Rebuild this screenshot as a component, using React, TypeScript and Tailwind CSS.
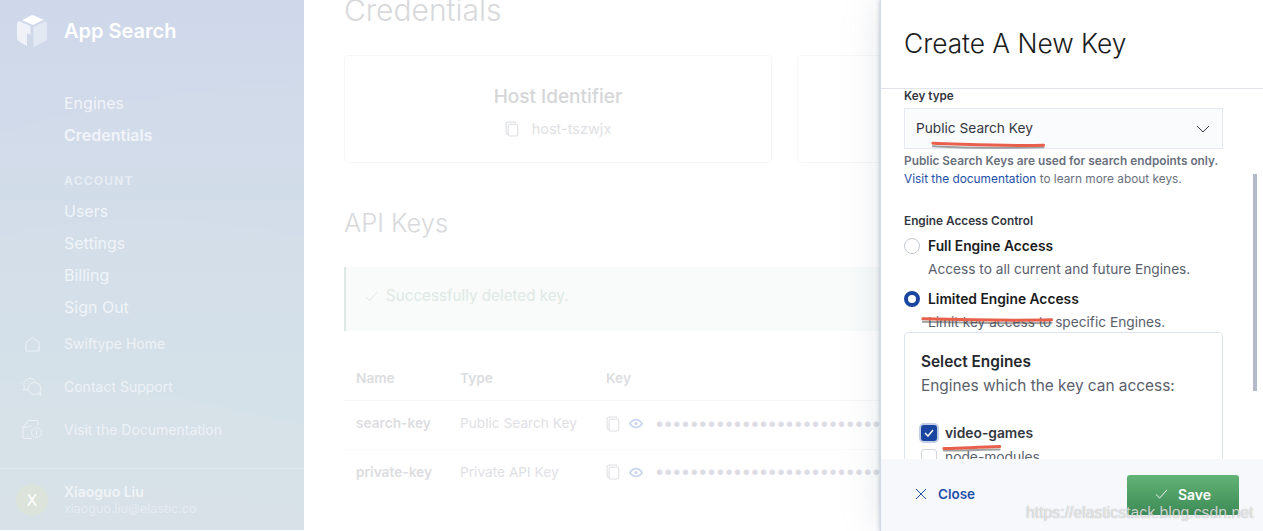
const font = { fontFamily: "Inter, 'Noto Sans', sans-serif" }

function CopyIcon({ className = "" }: { className?: string }) {
  return (
    <svg viewBox="0 0 16 18" fill="none" stroke="currentColor" strokeWidth="1.2" className={className}>
      <rect x="3.6" y="3.6" width="11" height="13.4" rx="2" />
      <path d="M3.4 15.4C2 15 1.2 14 1.2 12.6V3.4C1.2 2 2.2 1 3.6 1h7.2c.9 0 1.6.5 2 1.3" />
    </svg>
  )
}

function EyeIcon() {
  return (
    <svg viewBox="0 0 16 12" fill="none" className="w-[14px] h-[11px] text-[#cbd6ee]">
      <path d="M1 6c2-3 4.300-4.500 7-4.500S13 3 15 6c-2 3-4.300 4.500-7 4.500S3 9 1 6z" stroke="currentColor" strokeWidth="2" />
      <circle cx="8" cy="6" r="1.800" fill="currentColor" />
    </svg>
  )
}

function Logo() {
  return (
    <svg viewBox="0 0 30 32" className="w-[30px] h-[32px] shrink-0">
      <path d="M13.500 0.800C15 0.200 16.200 0.200 17.500 0.800L26.500 4.800 16 10 5 5.200z" fill="#ffffff" />
      <path d="M3.200 6.500 13.500 11.200V20L10 18V31.200L2.500 26.800C0.900 25.800 0 24.500 0 22.800V10C0 7.500 1.500 5.900 3.200 6.500z" fill="#eff3f9" />
      <path d="M27.800 6.500C29.200 6 30 8 30 10V22.800C30 24.500 29 25.800 27.500 26.600L16.500 32V12z" fill="#e3e9f4" />
    </svg>
  )
}

function HomeIcon() {
  return (
    <svg viewBox="0 0 16 16" fill="none" stroke="#eef2f6" strokeWidth="1" className="w-[15px] h-[16px]">
      <path d="M1 15.500V6.500L8 .8l7 5.700v9z" strokeLinejoin="round" />
    </svg>
  )
}

function ChatIcon() {
  return (
    <svg viewBox="0 0 20 20" fill="none" stroke="#eef2f6" strokeWidth="1" className="w-[20px] h-[20px]">
      <path d="M5.500 12.500 1.500 13.500 2.500 10.500C.5 6 3.500 1.500 8 1.500c2.500 0 4.500 1.200 5.500 3" />
      <ellipse cx="12.500" cy="11.500" rx="6.500" ry="6" />
      <path d="M16 16.500 19 18.500 18.500 15" />
    </svg>
  )
}

function DocIcon() {
  return (
    <svg viewBox="0 0 20 21" fill="none" stroke="#eef2f6" strokeWidth="1" className="w-[20px] h-[21px]">
      <path d="M10 19.500H1V8L6.500 1.500H16V7" />
      <path d="M1 8h6.500l2-2" />
      <circle cx="14.500" cy="13.500" r="5" />
      <path d="M14.500 12v4M14.500 10v1" />
    </svg>
  )
}

function SideLink({ label, bold }: { label: string; bold?: boolean }) {
  return (
    <div className={`h-[32px] flex items-center text-[16px] text-[#f1f4f8] ${bold ? "font-semibold" : ""}`}>
      {label}
    </div>
  )
}

function SecondaryLink({ icon, label }: { icon: React.ReactNode; label: string }) {
  return (
    <div className="h-[43px] flex items-center text-[14px] text-[#eef2f6]">
      <div className="w-[64px] flex justify-center">{icon}</div>
      {label}
    </div>
  )
}

function Sidebar() {
  return (
    <aside className="relative w-[304px] h-[530px] shrink-0 overflow-hidden bg-gradient-to-b from-[#cfd8ea] to-[#d4e1e8]">
      <svg viewBox="0 0 304 530" className="absolute inset-0 w-full h-full" fill="#ffffff">
        <path d="M0 133C90 105 190 90 304 80V530H0z" opacity=".03" />
        <path d="M0 236C90 212 200 215 304 237V530H0z" opacity=".03" />
        <path d="M0 312C90 280 210 275 304 295V530H0z" opacity=".02" />
        <path d="M0 382C100 375 210 405 304 425V530H0z" opacity=".03" />
        <path d="M0 500C100 480 210 490 304 510V530H0z" opacity=".03" />
      </svg>
      <div className="relative h-full flex flex-col">
        <div className="h-[62px] flex items-center pl-[17px] gap-[17px]">
          <Logo />
          <div className="text-[20px] font-semibold text-white">App Search</div>
        </div>
        <nav className="pl-[64px] pt-[25px]">
          <SideLink label="Engines" />
          <SideLink label="Credentials" bold />
          <div className="mt-[15px] h-[29px] flex items-center text-[12px] font-bold tracking-[0.1em] text-[#e7ecf3]">
            ACCOUNT
          </div>
          <SideLink label="Users" />
          <SideLink label="Settings" />
          <SideLink label="Billing" />
          <SideLink label="Sign Out" />
        </nav>
        <div className="-mt-[1px]">
          <SecondaryLink icon={<HomeIcon />} label="Swiftype Home" />
          <SecondaryLink icon={<ChatIcon />} label="Contact Support" />
          <SecondaryLink icon={<DocIcon />} label="Visit the Documentation" />
        </div>
        <div className="mt-auto h-[62px] border-t border-[#dfe7ee] flex items-center">
          <div className="w-[64px] flex justify-center">
            <div className="w-[32px] h-[32px] rounded-full bg-[#dbe3da] text-white text-[16px] flex items-center justify-center">
              X
            </div>
          </div>
          <div>
            <div className="text-[14px] leading-[17px] font-semibold text-[#f1f4f6]">Xiaoguo Liu</div>
            <div className="text-[12.500px] leading-[17px] text-[#e6ecf0]">xiaoguo.liu@elastic.co</div>
          </div>
        </div>
      </div>
    </aside>
  )
}

function CredentialCard({ title, value }: { title: string; value: string }) {
  return (
    <div className="w-[428px] h-[108px] shrink-0 rounded-[4px] border border-[#f6f6f7] pt-[6px] flex flex-col items-center justify-center">
      <div className="text-[19px] leading-[24px] font-medium text-[#d5d6d9]">{title}</div>
      <div className="mt-[10px] flex items-center gap-[13px] text-[14.500px] leading-[20px] text-[#e0e1e4]">
        <CopyIcon className="w-[14px] h-[16px] text-[#dcdde0]" />
        {value}
      </div>
    </div>
  )
}

function KeyRow({ name, type, last }: { name: string; type: string; last?: boolean }) {
  return (
    <div className={`h-[49px] flex items-center text-[13.700px] ${last ? "pb-[5px]" : "pb-[3px] border-b border-[#fafafb]"}`}>
      <div className="w-[104px] pl-[12px] font-semibold text-[#dcdde0] box-content">{name}</div>
      <div className="w-[146px] text-[#e0e1e4]">{type}</div>
      <div className="flex items-center whitespace-nowrap">
        <CopyIcon className="w-[14px] h-[16px] text-[#dfe0e3]" />
        <div className="ml-[9px]">
          <EyeIcon />
        </div>
        <div className="ml-[13px] text-[20px] leading-[16px] tracking-[1.670px] text-[#dcdde3]" style={{ fontFamily: "'Liberation Sans', sans-serif" }}>
          {"•".repeat(40)}
        </div>
      </div>
    </div>
  )
}

function Main() {
  return (
    <main className="flex-1 min-w-0 overflow-hidden pl-[40px]">
      <h1 className="-mt-[10px] h-[65px] text-[30px] leading-[40px] font-light text-[#d8d9db]">Credentials</h1>
      <div className="flex gap-[25px]">
        <CredentialCard title="Host Identifier" value="host-tszwjx" />
        <CredentialCard title="API Endpoint" value="host-tszwjx" />
      </div>
      <h2 className="mt-[43px] text-[25.500px] leading-[34px] font-light text-[#d8d9db]">API Keys</h2>
      <div className="mt-[27px] h-[64px] border-l-2 border-[#dfe9e4] bg-[#f8fbfa] pl-[19px] pb-[6px] flex items-center gap-[8px] text-[15.200px] text-[#dfe9e4]">
        <svg viewBox="0 0 14 12" fill="none" stroke="#dce7e1" strokeWidth="1" className="w-[13px] h-[11px]">
          <path d="M1 6.500 5 10.500 13 1" />
        </svg>
        Successfully deleted key.
      </div>
      <div className="mt-[26px] w-[900px]">
        <div className="h-[44px] flex items-center text-[13.700px] font-semibold text-[#dcdde0] border-b border-[#f5f5f6]">
          <div className="w-[104px] pl-[12px] box-content">Name</div>
          <div className="w-[146px]">Type</div>
          <div>Key</div>
        </div>
        <KeyRow name="search-key" type="Public Search Key" />
        <KeyRow name="private-key" type="Private API Key" last />
      </div>
    </main>
  )
}

function Drawer() {
  return (
    <section className="absolute top-0 right-0 bottom-0 w-[383px] bg-white border-l border-[#d3dae6] flex flex-col shadow-[0_0_36px_rgba(130,140,170,0.22),0_0_4px_rgba(100,110,140,0.45)]">
      <header className="h-[89px] shrink-0 border-b border-[#e3e6ef] pl-[23px] flex items-center">
        <h2 className="text-[26.300px] font-light text-[#1a1c21]">Create A New Key</h2>
      </header>
      <div className="relative flex-1 min-h-0 overflow-hidden pl-[23px] pr-[40px]">
        <div className="absolute right-[6px] top-[85px] w-[4px] h-[217px] bg-[#b5bac8]" />
        <div className="text-[11.700px] leading-[14px] font-semibold text-[#343741]">Key type</div>
        <div className="mt-[5px] h-[41px] bg-[#fafbfd] border border-[#e6e9f1] pl-[11px] pr-[12px] flex items-center justify-between text-[13.700px] text-[#343741]">
          Public Search Key
          <svg viewBox="0 0 14 8" fill="none" stroke="#343741" strokeWidth="1" className="w-[14px] h-[8px]">
            <path d="M1 1l6 6 6-6" />
          </svg>
        </div>
        <p className="mt-[3px] text-[11.850px] leading-[18px] text-[#69707d] whitespace-nowrap">
          <span className="font-semibold">Public Search Keys are used for search endpoints only.</span>
          <br />
          <span className="text-[#1f4fa8]">Visit the documentation</span> to learn more about keys.
        </p>
        <div className="mt-[25px] text-[11.800px] leading-[16px] font-semibold text-[#343741]">Engine Access Control</div>
        <div className="mt-[7px] flex items-center gap-[8px] h-[20px] text-[13.800px] font-semibold text-[#1a1c21]">
          <div className="w-[16px] h-[16px] rounded-full bg-white border border-[#c4c8d2]" />
          Full Engine Access
        </div>
        <div className="mt-[3px] pl-[24px] text-[13.700px] leading-[20px] text-[#5a606b]">Access to all current and future Engines.</div>
        <div className="mt-[10px] flex items-center gap-[8px] h-[20px] text-[13.800px] font-semibold text-[#1a1c21]">
          <div className="w-[16px] h-[16px] rounded-full bg-white border-[4px] border-[#1a45a0]" />
          Limited Engine Access
        </div>
        <div className="mt-[3px] pl-[24px] text-[13.700px] leading-[20px] text-[#5a606b]">Limit key access to specific Engines.</div>
        <div className="h-[200px] rounded-[4px] border border-[#dfe5ef] pt-[18px] pl-[16px] pr-[16px]">
          <div className="text-[15.400px] leading-[22px] font-semibold text-[#26282e]">Select Engines</div>
          <div className="mt-[1px] text-[15.400px] leading-[24px] whitespace-nowrap text-[#5a606b]">Engines which the key can access:</div>
          <div className="mt-[23px] flex items-center gap-[8px] h-[24px] text-[13.800px] font-semibold text-[#343741]">
            <div className="w-[16px] h-[16px] rounded-[3px] bg-[#1a45a0] ring-2 ring-[#c3cde6] flex items-center justify-center">
              <svg viewBox="0 0 10 8" fill="none" stroke="#ffffff" strokeWidth="1.500" className="w-[10px] h-[8px]">
                <path d="M1 4l3 3 5-6" />
              </svg>
            </div>
            video-games
          </div>
          <div className="flex items-center gap-[8px] h-[24px] text-[13.800px] text-[#5a606b]">
            <div className="w-[16px] h-[16px] rounded-[3px] bg-white border border-[#d3d6de]" />
            node-modules
          </div>
        </div>
      </div>
      <footer className="h-[72px] shrink-0 bg-[#f7f8fc] pl-[34px] pr-[24px] pt-[16px] flex items-start justify-between">
        <div className="h-[40px] pb-[2px] flex items-center gap-[11px] text-[13.500px] font-semibold text-[#1f4fa8]">
          <svg viewBox="0 0 12 12" fill="none" stroke="#1f4fa8" strokeWidth="1" className="w-[12px] h-[12px]">
            <path d="M1 1l10 10M11 1 1 11" />
          </svg>
          Close
        </div>
        <div className="w-[112px] h-[40px] pb-[2px] rounded-[3px] bg-gradient-to-b from-[#62b376] to-[#3d8b56] flex items-center justify-center gap-[10px] text-[14px] font-semibold text-white">
          <svg viewBox="0 0 14 11" fill="none" stroke="#ffffff" strokeWidth="1" className="w-[13px] h-[10px]">
            <path d="M1 6l4 4 8-9" />
          </svg>
          Save
        </div>
      </footer>
      {/* Red marker strokes drawn over the screenshot */}
      <svg viewBox="0 0 383 531" className="absolute inset-0 w-full h-full pointer-events-none" fill="none" strokeLinecap="round">
        <g stroke="#555" strokeWidth="2" opacity=".55">
          <path d="M52 146C90 148 120 148 163 147" />
          <path d="M42 322C80 323 130 324 171 323" />
          <path d="M63 451C90 451 100 450 119 450" />
        </g>
        <g stroke="#e8604c" strokeWidth="3">
          <path d="M52 143C90 144 120 146 163 145" />
          <path d="M42 319C80 320 130 321 171 320" />
          <path d="M63 449C90 448 100 448 119 447" />
        </g>
      </svg>
    </section>
  )
}

export default function App() {
  return (
    <div className="relative w-[1263px] h-[531px] overflow-hidden bg-white flex" style={font}>
      <Sidebar />
      <Main />
      <Drawer />
      {/* Blog watermark */}
      <div
        className="absolute left-[1026px] top-[503px] text-[15.800px] leading-[20px] text-white/70 whitespace-nowrap [text-shadow:0_0_1px_rgba(90,90,90,0.6)]"
        style={{ fontFamily: "'Liberation Sans', sans-serif" }}
      >
        https://elasticstack.blog.csdn.net
      </div>
    </div>
  )
}
